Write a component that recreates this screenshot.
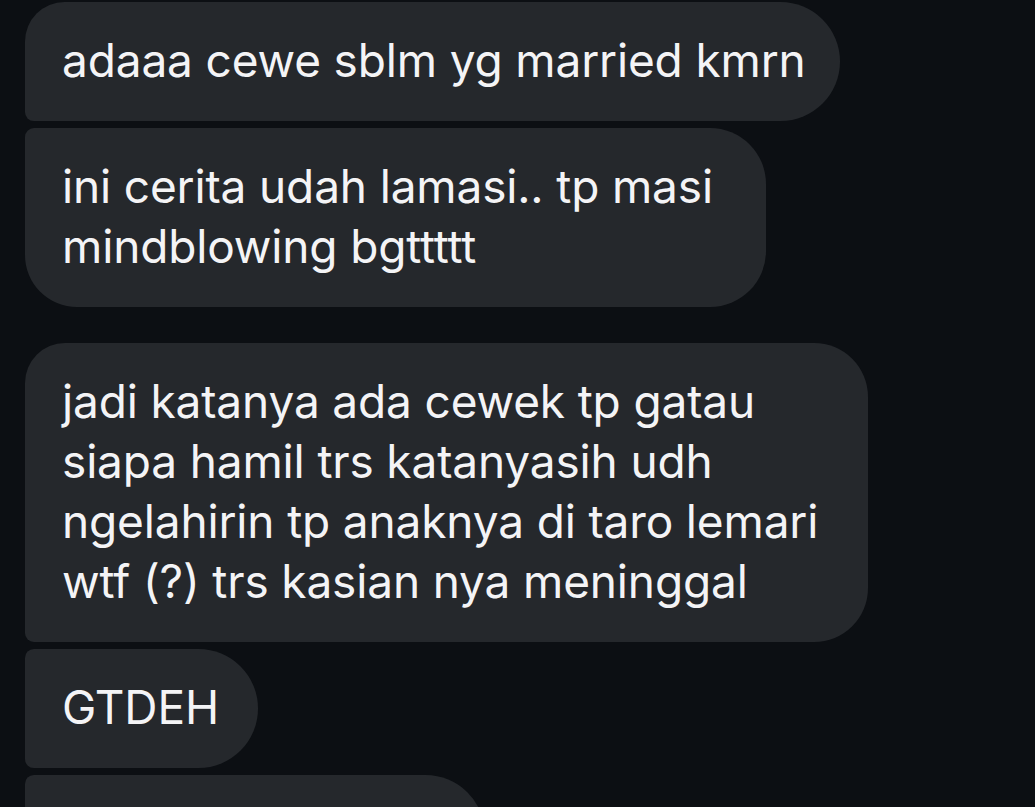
import React from 'react';

type Bubble = {
  lines: string[];
  width: string;
  shape: string;
  gap: string;
};

const bubbles: Bubble[] = [
  {
    lines: ['adaaa cewe sblm yg married kmrn'],
    width: 'w-[815px]',
    shape: 'rounded-tl-[40px] rounded-bl-[9px] rounded-r-[60px]',
    gap: 'mt-[2px]',
  },
  {
    lines: ['ini cerita udah lamasi.. tp masi', 'mindblowing bgttttt'],
    width: 'w-[741px]',
    shape: 'rounded-tl-[9px] rounded-bl-[52px] rounded-r-[56px]',
    gap: 'mt-[7px]',
  },
  {
    lines: [
      'jadi katanya ada cewek tp gatau',
      'siapa hamil trs katanyasih udh',
      'ngelahirin tp anaknya di taro lemari',
      'wtf (?) trs kasian nya meninggal',
    ],
    width: 'w-[843px]',
    shape: 'rounded-tl-[40px] rounded-bl-[9px] rounded-r-[54px]',
    gap: 'mt-[36px]',
  },
  {
    lines: ['GTDEH'],
    width: 'w-[233px]',
    shape: 'rounded-l-[9px] rounded-r-[60px]',
    gap: 'mt-[7px]',
  },
  {
    lines: ['ok'],
    width: 'w-[460px]',
    shape: 'rounded-l-[9px] rounded-r-[60px]',
    gap: 'mt-[7px]',
  },
];

export default function App() {
  return (
    <div className="w-[1035px] h-[807px] overflow-hidden bg-[#0c0f13] pl-[25px] font-['Inter','Liberation_Sans',sans-serif]">
      {bubbles.map((b, i) => (
        <div
          key={i}
          className={`${b.width} ${b.shape} ${b.gap} bg-[#25282c] pl-[37px] pr-[30px] pt-[28px] pb-[31px] text-[46px] leading-[60px] tracking-[-0.15px] text-[#f4f4f6] whitespace-nowrap`}
        >
          {i === 4 ? (
            <span className="invisible">{b.lines[0]}</span>
          ) : (
            b.lines.map((line, j) => <div key={j}>{line}</div>)
          )}
        </div>
      ))}
    </div>
  );
}
